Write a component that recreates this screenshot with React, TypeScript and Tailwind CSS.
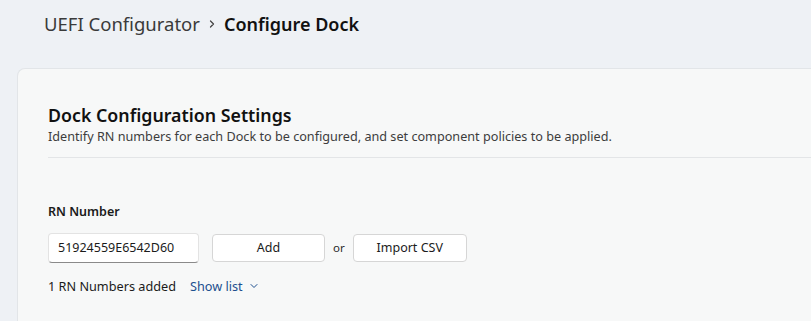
import { ChevronRight, ChevronDown } from 'lucide-react';

export default function App() {
  return (
    <div
      className="w-[811px] h-[321px] overflow-hidden bg-[#eef1f5] text-[#1b1b1b]"
      style={{ fontFamily: '"Noto Sans", "Open Sans", sans-serif' }}
    >
      {/* Breadcrumb */}
      <header className="h-[68px] pl-[44px] pb-[20px] flex items-center gap-[6px]">
        <span className="text-[18.5px] text-[#3a3a3a]">UEFI Configurator</span>
        <ChevronRight className="w-[12px] h-[12px] text-[#444]" strokeWidth={2.5} />
        <span className="text-[18px] font-semibold text-[#111]">Configure Dock</span>
      </header>

      {/* Card */}
      <div className="ml-[17px] h-[300px] bg-[#f7f8f8] border border-[#e2e5e8] border-r-0 rounded-tl-[8px] pl-[30px] pt-[34px]">
        <h2 className="text-[17.8px] leading-[25px] font-semibold text-[#111]">Dock Configuration Settings</h2>
        <p className="text-[12.65px] leading-[18px] text-[#3d3d3d] mt-[-1px]">
          Identify RN numbers for each Dock to be configured, and set component policies to be applied.
        </p>
        <div className="mt-[12px] h-px bg-[#e3e5e7]" />

        <div className="pt-[45px]">
          <label className="block text-[12.5px] font-semibold text-[#1b1b1b] leading-[18px]">RN Number</label>
          <div className="mt-[12px] flex items-center">
            <div className="w-[151px] h-[30px] bg-white border border-[#e3e3e3] border-b-[#8a8a8a] rounded-[4px] flex items-center pl-[9px] text-[12.5px] text-[#1b1b1b]">
              51924559E6542D60
            </div>
            <button className="ml-[13px] w-[113px] h-[28px] bg-white border border-[#d6d6d6] rounded-[4px] text-[12.5px] text-[#1b1b1b]">
              Add
            </button>
            <span className="ml-[8px] text-[11.5px] text-[#2a2a2a]">or</span>
            <button className="ml-[8px] w-[114px] h-[28px] bg-white border border-[#d6d6d6] rounded-[4px] text-[12.5px] text-[#1b1b1b]">
              Import CSV
            </button>
          </div>
          <div className="mt-[14px] flex items-center text-[12.7px] leading-[18px]">
            <span className="text-[#1b1b1b]">1 RN Numbers added</span>
            <button className="ml-[14px] flex items-center gap-[5px] text-[#1d4f8e]">
              Show list
              <ChevronDown className="w-[12px] h-[12px]" strokeWidth={2} />
            </button>
          </div>
        </div>
      </div>
    </div>
  );
}
